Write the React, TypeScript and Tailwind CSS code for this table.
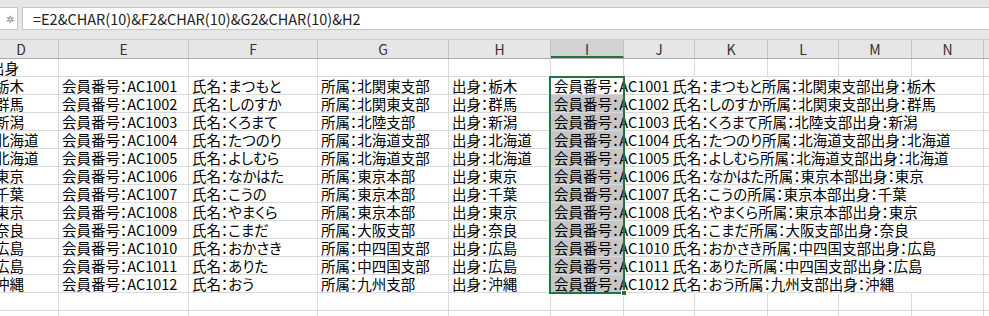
import React from 'react';

const rows = [
  { no: 'AC1001', name: 'まつもと', dept: '北関東支部', home: '栃木' },
  { no: 'AC1002', name: 'しのすか', dept: '北関東支部', home: '群馬' },
  { no: 'AC1003', name: 'くろまて', dept: '北陸支部', home: '新潟' },
  { no: 'AC1004', name: 'たつのり', dept: '北海道支部', home: '北海道' },
  { no: 'AC1005', name: 'よしむら', dept: '北海道支部', home: '北海道' },
  { no: 'AC1006', name: 'なかはた', dept: '東京本部', home: '東京' },
  { no: 'AC1007', name: 'こうの', dept: '東京本部', home: '千葉' },
  { no: 'AC1008', name: 'やまくら', dept: '東京本部', home: '東京' },
  { no: 'AC1009', name: 'こまだ', dept: '大阪支部', home: '奈良' },
  { no: 'AC1010', name: 'おかさき', dept: '中四国支部', home: '広島' },
  { no: 'AC1011', name: 'ありた', dept: '中四国支部', home: '広島' },
  { no: 'AC1012', name: 'おう', dept: '九州支部', home: '沖縄' },
];

const cols = [
  { key: 'D', w: 'w-[75px]' },
  { key: 'E', w: 'w-[130px]' },
  { key: 'F', w: 'w-[129px]' },
  { key: 'G', w: 'w-[131px]' },
  { key: 'H', w: 'w-[102px]' },
  { key: 'I', w: 'w-[73px]' },
  { key: 'J', w: 'w-[71px]' },
  { key: 'K', w: 'w-[73px]' },
  { key: 'L', w: 'w-[71px]' },
  { key: 'M', w: 'w-[73px]' },
  { key: 'N', w: 'w-[72px]' },
  { key: 'O', w: 'w-[60px]' },
];

const Cell = ({ w, children, className = '' }: { w: string; children?: React.ReactNode; className?: string }) => (
  <div className={`${w} shrink-0 h-[18px] border-r border-b border-[#d8dadb] pl-[3px] leading-[17px] whitespace-nowrap ${className}`}>
    {children}
  </div>
);

export default function App() {
  return (
    <div className="w-[989px] h-[316px] overflow-hidden bg-white text-black font-['Noto_Sans_CJK_JP',sans-serif] [font-feature-settings:'palt'] text-[14.5px]">
      {/* formula bar */}
      <div className="h-[40px] bg-[#e6e6e6] pt-[7px] flex gap-[4px] border-b border-[#d0d0d0]">
        <div className="w-[18px] h-[23px] bg-white border border-[#c6c6c6] border-l-0 flex items-center justify-end pr-[3px] text-[10px] text-[#888] leading-none">
          ✲
        </div>
        <div className="flex-1 h-[23px] bg-white border border-[#c6c6c6] border-r-0 pl-[10px] leading-[21px] text-[14.5px] text-[#222]">
          =E2&amp;CHAR(10)&amp;F2&amp;CHAR(10)&amp;G2&amp;CHAR(10)&amp;H2
        </div>
      </div>

      <div className="ml-[-16px] relative">
        {/* column headers */}
        <div className="flex h-[19px] bg-[#e6e6e6] border-b border-[#ababab]">
          {cols.map((c) => (
            <div
              key={c.key}
              className={`${c.w} shrink-0 h-[18px] border-r border-[#c4c4c4] text-center leading-[18px] text-[14px] text-[#333] ${
                c.key === 'I' ? 'bg-[#d2d2d2] border-b-2 border-b-[#217346]' : ''
              }`}
            >
              {c.key}
            </div>
          ))}
        </div>

        {/* row 1 */}
        <div className="flex">
          <Cell w="w-[75px]" className="overflow-hidden">
            <span className="ml-[3px]">出身</span>
          </Cell>
          {cols.slice(1).map((c) => (
            <Cell key={c.key} w={c.w} />
          ))}
        </div>

        {rows.map((r, i) => (
          <div key={r.no} className="flex">
            <Cell w="w-[75px]" className="overflow-hidden">
              <span className="ml-[8px]">{r.home}</span>
            </Cell>
            <Cell w="w-[130px]">会員番号：{r.no}</Cell>
            <Cell w="w-[129px]">氏名：{r.name}</Cell>
            <Cell w="w-[131px]">所属：{r.dept}</Cell>
            <Cell w="w-[102px]">出身：{r.home}</Cell>
            <Cell w="w-[73px]" className={`relative z-10 overflow-visible ${i === 0 ? '' : 'bg-[#c6c6c6]'}`}>
              <span className="relative">
                会員番号：{r.no}
                <span className="inline-block w-[3px]" />
                氏名：{r.name}所属：{r.dept}出身：{r.home}
              </span>
            </Cell>
            <Cell w="w-[71px]" className="border-r-transparent" />
            <Cell w="w-[73px]" className="border-r-transparent" />
            <Cell w="w-[71px]" className="border-r-transparent" />
            <Cell w="w-[73px]" className="border-r-transparent" />
            <Cell w="w-[72px]" />
            <Cell w="w-[60px]" />
          </div>
        ))}

        {[0, 1].map((k) => (
          <div key={k} className="flex">
            {cols.map((c) => (
              <Cell key={c.key} w={c.w} />
            ))}
          </div>
        ))}

        {/* selection border */}
        <div className="absolute left-[565px] top-[36px] w-[76px] h-[218px] border-2 border-[#217346] z-20 pointer-events-none">
          <div className="absolute right-[-4px] bottom-[-4px] w-[6px] h-[6px] bg-[#217346] border border-white" />
        </div>
      </div>
    </div>
  );
}
